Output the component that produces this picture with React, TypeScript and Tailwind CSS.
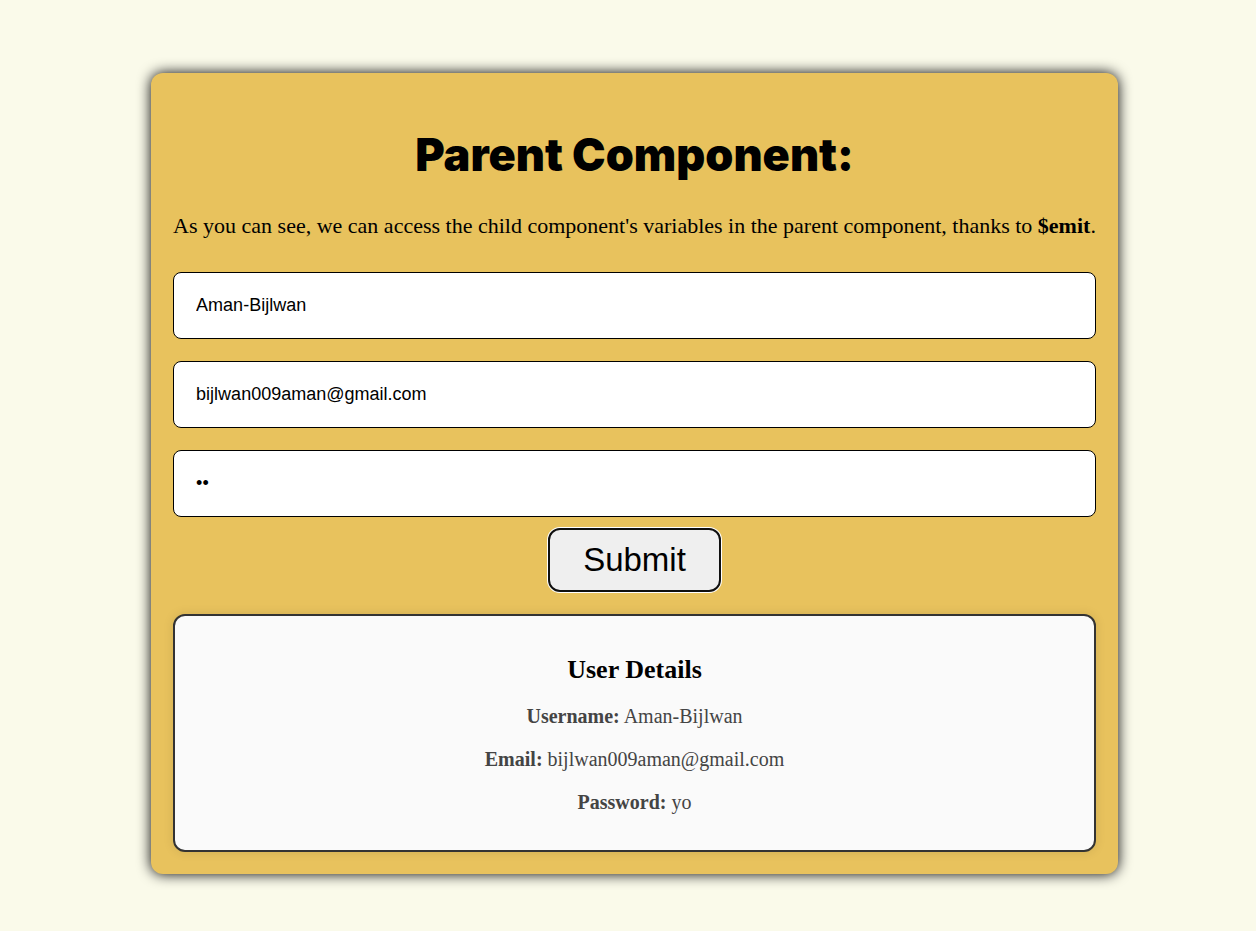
import { useState } from "react";
import type { FormEvent } from "react";

type User = { username: string; email: string; password: string };

const fieldClass =
  "block h-[67px] w-full rounded-lg border border-black bg-white px-[22px] font-['Liberation_Sans',sans-serif] text-[18px] text-black outline-none";

function Detail({ label, value }: { label: string; value: string }) {
  return (
    <p>
      <strong>{label}:</strong> {value}
    </p>
  );
}

export default function App() {
  const [form, setForm] = useState<User>({
    username: "Aman-Bijlwan",
    email: "bijlwan009aman@gmail.com",
    password: "yo",
  });
  const [user, setUser] = useState<User>(form);

  const submit = (event: FormEvent) => {
    event.preventDefault();
    setUser(form);
  };

  return (
    <main className="flex min-h-screen items-center justify-center bg-[#fafaea] py-14 pl-[13px] font-['Liberation_Serif',serif] text-black">
      <section className="mt-4 rounded-xl bg-[#e8c25d] px-[22px] pt-[52px] pb-[22px] text-center shadow-[0_0_14px_#000000]">
        <h1 className="font-['Inter',sans-serif] text-[45px] leading-[60px] font-black">Parent Component:</h1>
        <p className="mt-7 text-[22px] leading-[26px]">
          As you can see, we can access the child component&apos;s variables in the parent component, thanks to{" "}
          <strong>$emit</strong>.
        </p>
        <form onSubmit={submit} className="mt-[33px] flex flex-col items-center">
          <div className="flex w-full flex-col gap-[22px]">
            <input
              type="text"
              aria-label="Username"
              className={fieldClass}
              value={form.username}
              onChange={(e) => setForm({ ...form, username: e.target.value })}
            />
            <input
              type="email"
              aria-label="Email"
              className={fieldClass}
              value={form.email}
              onChange={(e) => setForm({ ...form, email: e.target.value })}
            />
            <input
              type="password"
              aria-label="Password"
              className={fieldClass}
              value={form.password}
              onChange={(e) => setForm({ ...form, password: e.target.value })}
            />
          </div>
          <button
            type="submit"
            className="mt-[11px] rounded-xl border-2 border-[#101010] bg-[#efefef] px-[33px] py-3 font-['Liberation_Sans',sans-serif] text-[33px] leading-[36px] ring-1 ring-white"
          >
            Submit
          </button>
        </form>
        <div className="mt-[22px] rounded-xl border-2 border-[#333333] bg-[#fafafa] px-[22px] pt-[39px] pb-9 shadow-[0_0_11px_rgba(0,0,0,0.1)]">
          <h2 className="text-[26px] leading-[30px] font-bold">User Details</h2>
          <div className="mt-5 flex flex-col gap-5 text-[20px] leading-[23px] text-[#444444]">
            <Detail label="Username" value={user.username} />
            <Detail label="Email" value={user.email} />
            <Detail label="Password" value={user.password} />
          </div>
        </div>
      </section>
    </main>
  );
}
